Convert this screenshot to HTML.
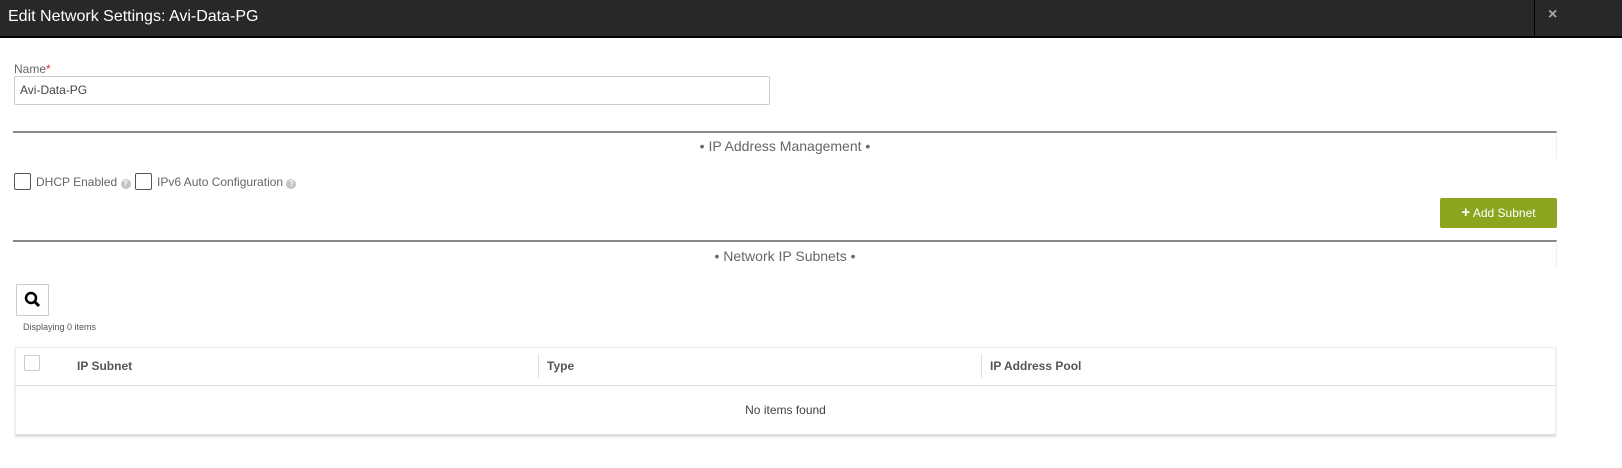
<!DOCTYPE html>
<html><head><style>
*{box-sizing:border-box;margin:0;padding:0}
body{width:1622px;height:468px;background:#fff;font-family:"Liberation Sans",sans-serif;position:relative;overflow:hidden;color:#555}
.a{position:absolute}
.h{display:inline-block;width:10px;height:10px;border-radius:50%;background:#c4c4c4;color:#fff;font-size:8px;line-height:10px;text-align:center;font-weight:bold;vertical-align:0}
</style></head><body>
<div class="a" style="left:0;top:0;width:1622px;height:38px;background:#28282a;border-bottom:2px solid #000"></div>
<div class="a" style="left:8px;top:8px;font-size:16px;color:#fff">Edit Network Settings: Avi-Data-PG</div>
<div class="a" style="left:1534px;top:0;width:1px;height:37px;background:#000"></div>
<div class="a" style="left:1548px;top:6px;font-size:16px;font-weight:bold;color:#aaa">×</div>
<div class="a" style="left:14px;top:62px;font-size:12px;color:#666">Name<span style="color:#e33">*</span></div>
<div class="a" style="left:14px;top:76px;width:756px;height:29px;border:1px solid #ccc;border-radius:2px;font-size:12px;color:#444;padding:6px 5px">Avi-Data-PG</div>
<div class="a" style="left:13px;top:131px;width:1544px;height:28px;border-top:2px solid #888;border-right:1px solid #eee"></div>
<div class="a" style="left:0;top:138px;width:1570px;text-align:center;font-size:14px;color:#666">• IP Address Management •</div>
<div class="a" style="left:14px;top:173px;width:17px;height:17px;border:1px solid #555;border-radius:2px"></div>
<div class="a" style="left:36px;top:175px;font-size:12px;color:#666">DHCP Enabled <span class="h">?</span></div>
<div class="a" style="left:135px;top:173px;width:17px;height:17px;border:1px solid #555;border-radius:2px"></div>
<div class="a" style="left:157px;top:175px;font-size:12px;color:#666">IPv6 Auto Configuration <span class="h">?</span></div>
<div class="a" style="left:1440px;top:198px;width:117px;height:30px;background:#8ca51f;border-radius:2px;color:#fff;font-size:12px;text-align:center;line-height:30px"><b style="font-size:15px">+</b> Add Subnet</div>
<div class="a" style="left:13px;top:240px;width:1544px;height:28px;border-top:2px solid #888;border-right:1px solid #eee"></div>
<div class="a" style="left:0;top:248px;width:1570px;text-align:center;font-size:14px;color:#666">• Network IP Subnets •</div>
<div class="a" style="left:16px;top:284px;width:33px;height:32px;border:1px solid #ccc">
<svg width="31" height="30" viewBox="0 0 31 30"><circle cx="14" cy="13" r="5" fill="none" stroke="#000" stroke-width="2.5"/><line x1="18" y1="17" x2="22" y2="21" stroke="#000" stroke-width="3"/></svg></div>
<div class="a" style="left:23px;top:322px;font-size:9px;color:#555">Displaying 0 items</div>
<div class="a" style="left:15px;top:347px;width:1541px;height:89px;border:1px solid #eee;border-bottom:2px solid #ddd;box-shadow:0 1px 2px #ddd"></div>
<div class="a" style="left:15px;top:385px;width:1541px;height:1px;background:#ddd"></div>
<div class="a" style="left:24px;top:355px;width:16px;height:16px;border:1px solid #ccc;border-radius:2px"></div>
<div class="a" style="left:77px;top:359px;font-size:12px;font-weight:bold;color:#555">IP Subnet</div>
<div class="a" style="left:538px;top:354px;width:1px;height:24px;background:#ddd"></div>
<div class="a" style="left:547px;top:359px;font-size:12px;font-weight:bold;color:#555">Type</div>
<div class="a" style="left:981px;top:354px;width:1px;height:24px;background:#ddd"></div>
<div class="a" style="left:990px;top:359px;font-size:12px;font-weight:bold;color:#555">IP Address Pool</div>
<div class="a" style="left:15px;top:403px;width:1541px;text-align:center;font-size:12px;color:#444">No items found</div>
</body></html>
